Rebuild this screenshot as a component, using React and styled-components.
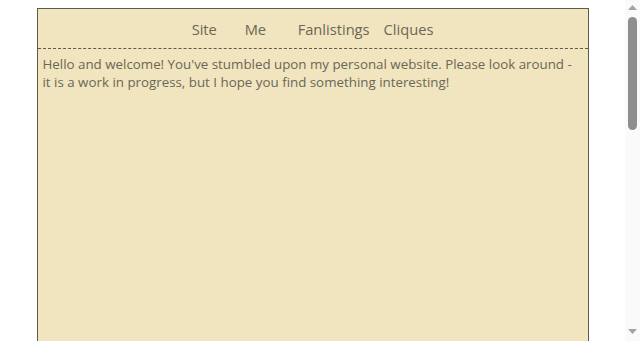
import React from 'react'
import styled, { createGlobalStyle } from 'styled-components'

const Global = createGlobalStyle`
html { overflow-y: scroll; }
body {
    margin: 8px 23px 8px 8px;
    background: #ffffff;
    font-family: "Open Sans", "DejaVu Sans", sans-serif;
}
`

const Wrapper = styled.div`
width: 550px;
min-height: 900px;
margin: 0 auto;
background: #f0e5be;
border: 1px solid #5f5a4c;
`

const Nav = styled.nav`
text-align: center;
padding: 10px 0 9px;
border-bottom: 1px dashed #5f5a4c;
font-size: 11pt;
line-height: 20px;
`

const NavItem = styled.a`
display: inline-block;
min-width: 39px;
padding: 0 7px;
text-align: left;
color: #6b6658;
text-decoration: none;
cursor: pointer;
`

const Content = styled.div`
padding: 6px 5px;
font-size: 10pt;
line-height: 18px;
color: #6b6658;
`

// page scrollbar, drawn over the right edge
const ScrollTrack = styled.div`
position: fixed;
top: 0;
right: 0;
bottom: 0;
width: 15px;
background: #fafafa;
display: flex;
flex-direction: column;
align-items: center;
`

const Arrow = styled.svg`
width: 9px;
height: 5px;
margin: ${p => (p.down ? 'auto 0 7px' : '5px 0 0')};
flex-shrink: 0;
`

const Thumb = styled.div`
width: 9px;
height: 113px;
margin-top: 7px;
background: #8e8e8e;
border-radius: 5px;
`

const links = ['Site', 'Me', 'Fanlistings', 'Cliques']

function App() {
    return (
        <>
            <Global />
            <Wrapper>
                <Nav>
                    {links.map(l => (
                        <NavItem key={l}>{l}</NavItem>
                    ))}
                </Nav>
                <Content>
                    Hello and welcome! You've stumbled upon my personal website. Please look around - it is a work in progress, but I hope you find something interesting!
                </Content>
            </Wrapper>
            <ScrollTrack>
                <Arrow viewBox="0 0 9 5">
                    <path d="M4.5 0 L9 5 L0 5 Z" fill="#a3a3a3" />
                </Arrow>
                <Thumb />
                <Arrow down viewBox="0 0 9 5">
                    <path d="M0 0 L9 0 L4.5 5 Z" fill="#a3a3a3" />
                </Arrow>
            </ScrollTrack>
        </>
    )
}

export default App
